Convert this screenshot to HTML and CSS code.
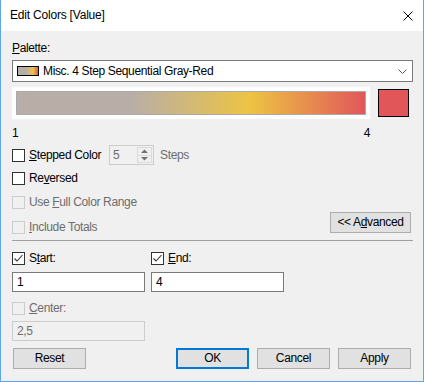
FILE: index.html
```html
<!DOCTYPE html>
<html>
<head>
<meta charset="utf-8">
<link rel="stylesheet" href="styles.css">
</head>
<body>
<div class="window">
  <div class="titlebar">
    <span class="title">Edit Colors [Value]</span>
    <svg class="close" width="10" height="10" viewBox="0 0 10 10"><path d="M0.5 0.5L9.5 9.5M9.5 0.5L0.5 9.5" stroke="#000" stroke-width="1" fill="none"/></svg>
  </div>
  <div class="content">
    <div class="palette-label"><u>P</u>alette:</div>
    <div class="select">
      <span class="swatch"></span>
      <span class="select-text">Misc. 4 Step Sequential Gray-Red</span>
      <svg class="chevron" width="9" height="5" viewBox="0 0 9 5"><path d="M0.5 0.5L4.5 4.5L8.5 0.5" stroke="#555" stroke-width="1" fill="none"/></svg>
    </div>
    <div class="ramp-row">
      <div class="ramp-frame"><div class="ramp"></div></div>
      <div class="color-square"></div>
    </div>
    <div class="ramp-labels"><span>1</span><span>4</span></div>
    <div class="stepped-row">
      <div class="check-item stepped-label"><span class="box"></span><span><u>S</u>tepped Color</span></div>
      <div class="spin">
        <span class="spin-value">5</span>
        <span class="spin-buttons">
          <span class="spin-btn"><svg width="7" height="4" viewBox="0 0 7 4"><path d="M0 4L3.5 0.5L7 4Z" fill="#707070"/></svg></span>
          <span class="spin-btn"><svg width="7" height="4" viewBox="0 0 7 4"><path d="M0 0L3.5 3.5L7 0Z" fill="#707070"/></svg></span>
        </span>
      </div>
      <span class="steps-text">Steps</span>
    </div>
    <div class="check-item row-reversed"><span class="box"></span><span>Re<u>v</u>ersed</span></div>
    <div class="check-item disabled row-full"><span class="box"></span><span>Use <u>F</u>ull Color Range</span></div>
    <div class="totals-row">
      <div class="check-item disabled totals-item"><span class="box"></span><span><u>I</u>nclude Totals</span></div>
      <div class="btn adv">&lt;&lt; A<u>d</u>vanced</div>
    </div>
    <div class="separator"></div>
    <div class="range-grid">
      <div class="check-item"><span class="box"><svg width="11" height="11" viewBox="0 0 11 11"><path d="M1.5 5.5L4 8L9.5 2" stroke="#333" stroke-width="1.1" fill="none"/></svg></span><span>S<u>t</u>art:</span></div>
      <div class="check-item"><span class="box"><svg width="11" height="11" viewBox="0 0 11 11"><path d="M1.5 5.5L4 8L9.5 2" stroke="#333" stroke-width="1.1" fill="none"/></svg></span><span><u>E</u>nd:</span></div>
      <div class="input">1</div>
      <div class="input">4</div>
    </div>
    <div class="check-item disabled row-center"><span class="box"></span><span><u>C</u>enter:</span></div>
    <div class="input disabled-input">2,5</div>
    <div class="button-row">
      <div class="btn reset">Reset</div>
      <div class="btn ok">OK</div>
      <div class="btn">Cancel</div>
      <div class="btn apply">Apply</div>
    </div>
  </div>
</div>
</body>
</html>
```
FILE: styles.css
```css
body {
  margin: 0;
  font-family: "Liberation Sans", Arial, sans-serif;
  font-size: 12px;
  line-height: 15px;
  letter-spacing: -0.35px;
  color: #000;
}
u {
  text-decoration: underline;
  text-underline-offset: 1px;
}
.window {
  width: 424px;
  height: 382px;
  box-sizing: border-box;
  border: 1px solid #5ea6ea;
  border-top: none;
  background: #f0f0f0;
  display: flex;
  flex-direction: column;
}
.titlebar {
  height: 31px;
  flex: none;
  background: #fff;
  display: flex;
  align-items: center;
  justify-content: space-between;
  padding: 0 10px 0 9px;
}
.title { letter-spacing: -0.2px; }
.close { display: block; }
.content {
  display: flex;
  flex-direction: column;
  padding: 0 10px 0 11px;
}
.palette-label { margin-top: 10px; }
.select {
  margin-top: 4px;
  height: 22px;
  box-sizing: border-box;
  border: 1px solid #7a7a7a;
  background: #fff;
  display: flex;
  align-items: center;
  padding-left: 4px;
}
.swatch {
  width: 22px;
  height: 10px;
  box-sizing: border-box;
  border: 1px solid #000;
  background: linear-gradient(to right, #b9aea7 0%, #b9aea7 40%, #edc443 75%, #e15759 100%);
}
.select-text { margin-left: 4px; }
.chevron { margin-left: auto; margin-right: 5px; display: block; }
.ramp-row {
  margin-top: 5px;
  display: flex;
  align-items: flex-start;
}
.ramp-frame {
  width: 358px;
  height: 32px;
  box-sizing: border-box;
  padding: 4px;
  background: #fff;
}
.ramp {
  height: 24px;
  box-sizing: border-box;
  border: 1px solid #aaa;
  background: linear-gradient(to right, #b9aea7 0%, #b9aea7 33%, #edc443 67%, #e15759 100%);
}
.color-square {
  margin-left: 8px;
  margin-top: 2px;
  width: 31px;
  height: 28px;
  box-sizing: border-box;
  border: 1px solid #000;
  background: #e15759;
}
.ramp-labels {
  width: 358px;
  margin-top: 7px;
  display: flex;
  justify-content: space-between;
}
.check-item {
  height: 15px;
  display: flex;
  align-items: center;
  gap: 4px;
}
.box {
  width: 13px;
  height: 13px;
  flex: none;
  box-sizing: border-box;
  border: 1px solid #333;
  background: #fff;
  display: flex;
  align-items: center;
  justify-content: center;
}
.box svg { display: block; }
.disabled { color: #6d6d6d; }
.disabled .box {
  border-color: #cccccc;
  background: transparent;
}
.stepped-row {
  margin-top: 4px;
  height: 20px;
  display: flex;
  align-items: center;
}
.stepped-label { width: 97px; }
.spin {
  width: 45px;
  height: 20px;
  box-sizing: border-box;
  border: 1px solid #cccccc;
  display: flex;
}
.spin-value {
  flex: 1;
  padding-left: 3px;
  line-height: 18px;
  color: #6d6d6d;
}
.spin-buttons {
  width: 16px;
  display: flex;
  flex-direction: column;
  padding: 1px 1px 1px 0;
  box-sizing: border-box;
}
.spin-btn {
  flex: 1;
  display: flex;
  align-items: center;
  justify-content: center;
  border: 1px solid #dadada;
}
.spin-btn + .spin-btn { border-top: none; }
.spin-btn svg { display: block; }
.steps-text {
  margin-left: 6px;
  color: #6d6d6d;
}
.row-reversed { margin-top: 6px; }
.row-full { margin-top: 9px; }
.totals-row {
  margin-top: 2px;
  display: flex;
  justify-content: space-between;
  align-items: flex-start;
}
.totals-item { margin-top: 8px; }
.btn {
  width: 73px;
  height: 21px;
  box-sizing: border-box;
  border: 1px solid #adadad;
  background: #e1e1e1;
  display: flex;
  align-items: center;
  justify-content: center;
}
.adv {
  width: 81px;
  margin-right: 2px;
}
.separator {
  margin-top: 5px;
  height: 1px;
  background: #a0a0a0;
}
.range-grid {
  margin-top: 10px;
  display: grid;
  grid-template-columns: 133px 133px;
  column-gap: 6px;
  row-gap: 6px;
}
.input {
  width: 133px;
  height: 20px;
  box-sizing: border-box;
  border: 1px solid #7a7a7a;
  background: #fff;
  padding-left: 4px;
  line-height: 18px;
}
.row-center { margin-top: 9px; }
.disabled-input {
  margin-top: 5px;
  border-color: #cccccc;
  background: #f0f0f0;
  color: #6d6d6d;
}
.button-row {
  margin-top: 7px;
  display: flex;
  gap: 8px;
}
.reset { margin-left: 1px; }
.ok {
  margin-left: auto;
  border: 2px solid #0078d7;
}
.apply { margin-right: 2px; }
```
